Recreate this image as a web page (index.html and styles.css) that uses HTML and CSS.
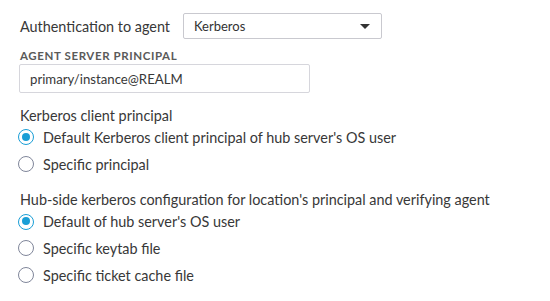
FILE: index.html
```html
<!DOCTYPE html>
<html lang="en">
<head>
  <meta charset="UTF-8" />
  <title>Kerberos settings</title>
  <link rel="stylesheet" href="styles.css">
</head>
<body>
  <div class="form">
    <div class="row">
      <span class="text">Authentication to agent</span>
      <div class="select">
        <span>Kerberos</span>
        <span class="caret"></span>
      </div>
    </div>

    <div class="field">
      <div class="caption">AGENT SERVER PRINCIPAL</div>
      <div class="input">primary/instance@REALM</div>
    </div>

    <div class="group">
      <div class="text">Kerberos client principal</div>
      <label class="radio"><span class="dot checked"></span>Default Kerberos client principal of hub server's OS user</label>
      <label class="radio"><span class="dot"></span>Specific principal</label>
    </div>

    <div class="group">
      <div class="text">Hub-side kerberos configuration for location's principal and verifying agent</div>
      <label class="radio"><span class="dot checked"></span>Default of hub server's OS user</label>
      <label class="radio"><span class="dot"></span>Specific keytab file</label>
      <label class="radio"><span class="dot"></span>Specific ticket cache file</label>
    </div>
  </div>
</body>
</html>
```

FILE: styles.css
```css
body {
  margin: 0;
  background: #ffffff;
  color: #383838;
  font-family: 'Lato', sans-serif;
  font-size: 14.4px;
}

.form {
  padding: 13px 20px 0 20px;
}

.row {
  display: flex;
  align-items: center;
}

.row .text {
  width: 163px;
}

.select {
  width: 176px;
  height: 24px;
  border: 1px solid #c9c9cf;
  border-radius: 2px;
  display: flex;
  align-items: center;
  justify-content: space-between;
  padding: 0 11px 0 10px;
  font-size: 13px;
  color: #333;
}

.caret {
  width: 0;
  height: 0;
  border-left: 5px solid transparent;
  border-right: 5px solid transparent;
  border-top: 5px solid #333;
}

.field {
  margin-top: 10px;
}

.caption {
  font-size: 11.5px;
  font-weight: 700;
  letter-spacing: 0.6px;
  color: #5a5a5a;
  margin-bottom: 2px;
}

.input {
  width: 279px;
  height: 27px;
  border: 1px solid #d6d6dc;
  border-radius: 2px;
  margin-left: -1px;
  padding-left: 10px;
  display: flex;
  align-items: center;
  font-size: 13.2px;
}

.group {
  margin-top: 13px;
  display: flex;
  flex-direction: column;
}

.group .text {
  line-height: 20px;
  margin-bottom: -2px;
}

.radio {
  display: flex;
  align-items: center;
  gap: 9px;
  height: 26.7px;
  margin-left: -2px;
}

.dot {
  width: 16px;
  height: 16px;
  border: 1.5px solid #80869a;
  border-radius: 50%;
  box-sizing: border-box;
  flex: none;
  position: relative;
}

.dot.checked {
  border-color: #1a9ed6;
}

.dot.checked::after {
  content: "";
  position: absolute;
  left: 2.5px;
  top: 2.5px;
  width: 8px;
  height: 8px;
  border-radius: 50%;
  background: #1a9ed6;
}
```
